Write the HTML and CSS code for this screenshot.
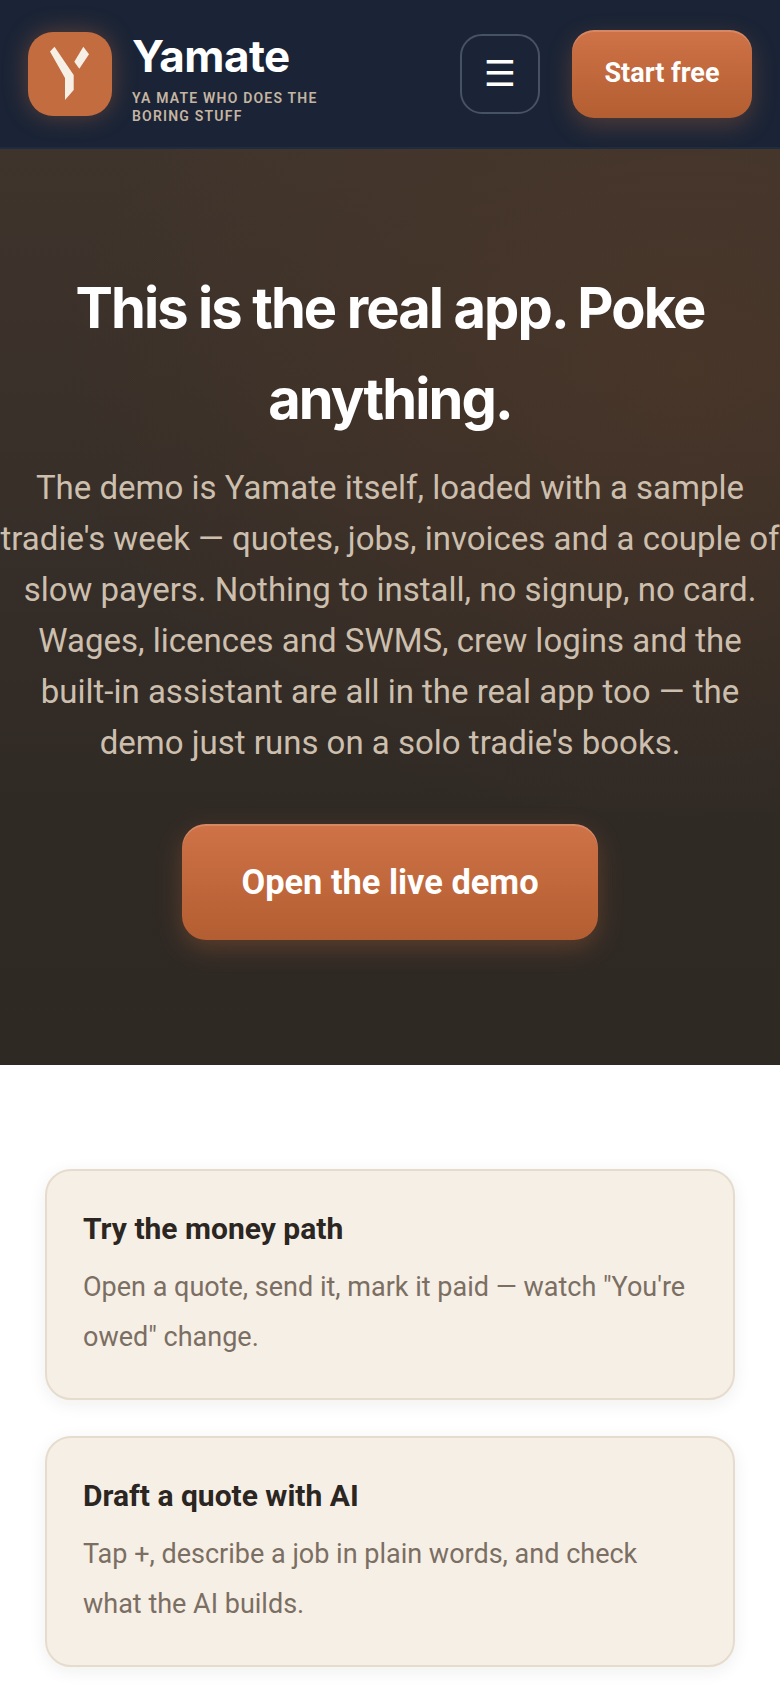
FILE: index.html
```html
<!DOCTYPE html>
<html lang="en">
<head>
<meta charset="utf-8">
<title>Yamate – Live demo</title>
<link rel="stylesheet" href="styles.css">
</head>
<body>
<header class="topbar">
  <a class="brand" href="#">
    <span class="brand-mark">
      <svg viewBox="0 0 84 84" width="84" height="84" aria-hidden="true">
        <path class="mark-y" d="M22 19.5 26.5 14.7 45.7 43V58L37 68V46Z"/>
        <path class="mark-y" d="M55.3 14.7 61 22.3 51.3 36.7 46.3 29.7Z"/>
      </svg>
    </span>
    <span class="brand-text">
      <span class="brand-name">Yamate</span>
      <span class="brand-tag">YA MATE WHO DOES THE BORING STUFF</span>
    </span>
  </a>
  <button class="menu-btn" type="button" aria-label="Menu">☰</button>
  <a class="btn btn-small" href="#">Start free</a>
</header>

<section class="hero">
  <h1>This is the real app. Poke anything.</h1>
  <p>The demo is Yamate itself, loaded with a sample tradie's week — quotes, jobs, invoices and a couple of slow payers. Nothing to install, no signup, no card. Wages, licences and SWMS, crew logins and the built-in assistant are all in the real app too — the demo just runs on a solo tradie's books.</p>
  <a class="btn btn-large" href="#">Open the live demo</a>
</section>

<main class="tips">
  <article class="tip">
    <h3>Try the money path</h3>
    <p>Open a quote, send it, mark it paid — watch "You're owed" change.</p>
  </article>
  <article class="tip">
    <h3>Draft a quote with AI</h3>
    <p>Tap +, describe a job in plain words, and check what the AI builds.</p>
  </article>
</main>
</body>
</html>
```
FILE: styles.css
```css
* { box-sizing: border-box; }

html, body { margin: 0; padding: 0; }

body {
  background: #fff;
  font-family: Roboto, "Liberation Sans", sans-serif;
  color: #2b2622;
  height: 1688px;
  overflow: hidden;
}

a { text-decoration: none; color: inherit; }

/* Top navigation */
.topbar {
  height: 149px;
  display: flex;
  align-items: center;
  padding: 0 28px;
  background: #1a2436;
  border-bottom: 2px solid #1f2c3f;
}

.brand {
  display: flex;
  align-items: center;
  gap: 20px;
  flex: 1;
  min-width: 0;
}

.brand-mark {
  flex: none;
  width: 84px;
  height: 84px;
  border-radius: 25px;
  background: #c36c40;
  box-shadow: 0 0 24px rgba(195, 108, 64, .4);
}

.brand-mark svg { display: block; }
.mark-y { fill: #f6efe6; }

.brand-text { display: flex; flex-direction: column; width: 200px; padding-top: 9px; }

.brand-name {
  font-family: Inter, "Open Sans", sans-serif;
  font-weight: 700;
  font-size: 44px;
  line-height: 50px;
  letter-spacing: -.5px;
  color: #fff;
}

.brand-tag {
  margin-top: 8px;
  font-size: 14px;
  line-height: 18px;
  font-weight: 600;
  letter-spacing: 1.2px;
  color: #c6b5a2;
}

.menu-btn {
  flex: none;
  width: 80px;
  height: 80px;
  margin-right: 32px;
  padding: 0;
  border: 2px solid #475263;
  border-radius: 22px;
  background: transparent;
  color: #fff;
  font-size: 36px;
  line-height: 1;
  font-family: "DejaVu Sans", sans-serif;
}

/* Orange call-to-action buttons */
.btn {
  display: flex;
  align-items: center;
  justify-content: center;
  color: #fff;
  font-weight: 700;
  background: linear-gradient(180deg, #cf7247, #b35e32);
  box-shadow: inset 0 2px 0 rgba(255, 255, 255, .16), 0 8px 24px rgba(195, 108, 64, .3);
}

.btn-small {
  flex: none;
  width: 180px;
  height: 88px;
  border-radius: 22px;
  font-size: 27px;
  padding-bottom: 1px;
}

.btn-large {
  width: 416px;
  height: 116px;
  border-radius: 24px;
  font-size: 34.4px;
}

/* Hero */
.hero {
  height: 916px;
  display: flex;
  flex-direction: column;
  align-items: center;
  padding-top: 114px;
  text-align: center;
  background:
    radial-gradient(ellipse 620px 460px at 88% 24%, rgba(92, 60, 40, .42), transparent 100%),
    linear-gradient(180deg, #3f342c 0%, #302a25 72%, #2f2924 100%);
}

.hero h1 {
  margin: 0;
  width: 700px;
  font-family: Inter, "Open Sans", sans-serif;
  font-size: 56px;
  line-height: 91px;
  font-weight: 700;
  letter-spacing: -1.9px;
  color: #fff;
}

.hero p {
  margin: 17px -10px 0;
  width: 800px;
  padding: 0 10px;
  font-size: 33px;
  line-height: 51px;
  color: #cdbfae;
}

.hero .btn-large { margin-top: 56px; }

/* Suggestion cards */
.tips {
  display: flex;
  flex-direction: column;
  gap: 36px;
  padding: 104px 45px 0;
}

.tip {
  height: 231px;
  padding: 38px 36px;
  border: 2px solid #e6dccd;
  border-radius: 26px;
  background: #f6efe6;
  box-shadow: 0 4px 18px rgba(40, 30, 20, .07);
}

.tip h3 {
  margin: 0;
  font-size: 30px;
  line-height: 40px;
  font-weight: 700;
  color: #2b2622;
}

.tip p {
  margin: 13px 0 0;
  font-size: 27px;
  line-height: 50px;
  color: #7b6e62;
}
```
